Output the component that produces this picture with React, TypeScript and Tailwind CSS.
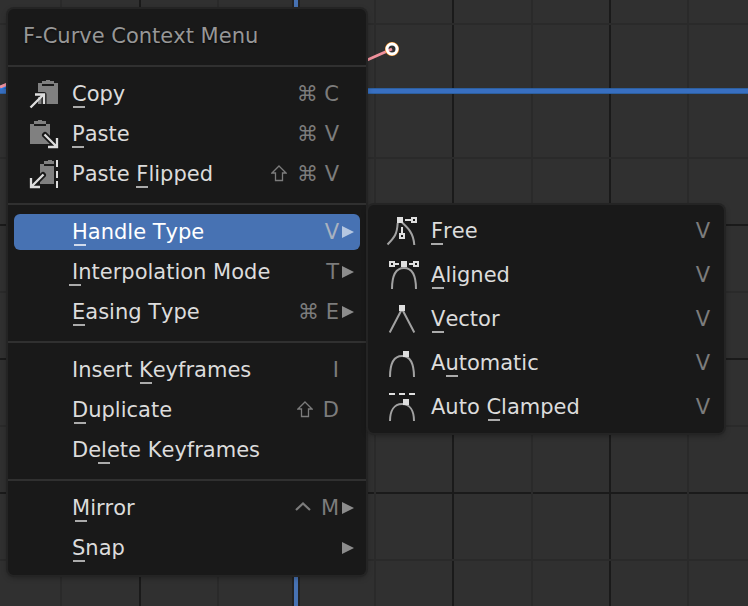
import type { ReactNode } from "react";

type Item = {
  before?: string;
  mnemonic: string;
  after: string;
  modifier?: ReactNode;
  shortcut?: string;
  icon?: ReactNode;
  submenu?: boolean;
  active?: boolean;
};

function Icon({ children }: { children: ReactNode }) {
  return (
    <svg className="size-8 overflow-visible" viewBox="0 0 32 32" fill="none" aria-hidden="true">
      {children}
    </svg>
  );
}

const copyIcon = (
  <Icon>
    <path d="M10 5h20v21H10z" fill="#808080" />
    <path d="M14 6h12v2H14z" fill="#191919" />
    <path d="M18 2h4v1h4v3H14V3h4z" fill="#808080" />
    <path d="M7 16.5H16V26" stroke="#191919" strokeWidth="5" strokeLinejoin="round" />
    <path d="M2.5 29.5L15.5 16.5M7 16.5H16V26" stroke="#dedede" strokeWidth="2.3" />
  </Icon>
);

const pasteIcon = (
  <Icon>
    <path d="M2 6h20v20H2z" fill="#808080" />
    <path d="M6 6h12v2H6z" fill="#191919" />
    <path d="M10 2h4v1h4v3H6V3h4z" fill="#808080" />
    <path d="M17 17L28 28" stroke="#191919" strokeWidth="6" strokeLinecap="round" />
    <path d="M16.5 16.5L28.5 28.5M29 20V29H20" stroke="#dedede" strokeWidth="2.3" />
  </Icon>
);

const flippedIcon = (
  <Icon>
    <path d="M12 6h14v20H12z" fill="#808080" />
    <path d="M16 6h10v2H16z" fill="#191919" />
    <path d="M20 2h4v1h2v3H16V3h4z" fill="#808080" />
    <path d="M15 17L4 28" stroke="#191919" strokeWidth="6" strokeLinecap="round" />
    <path d="M15.5 16.5L3.5 28.5M3 20V29H12" stroke="#dedede" strokeWidth="2.3" />
    <path d="M29 2V9M29 13V20M29 23V30" stroke="#dedede" strokeWidth="2" />
  </Icon>
);

const freeIcon = (
  <Icon>
    <path d="M1.5 29.5C9 22 11 19 11.7 8M16 7.5C22 13 27.5 18 28.3 30" stroke="#a2a2a2" strokeWidth="2" />
    <path d="M11 2h6v6h-6z" fill="#dedede" />
    <path d="M19 5H25M26 3h4v4h-4zM16 12V18M14 19h4v4h-4z" stroke="#dedede" strokeWidth="2" />
  </Icon>
);

const alignedIcon = (
  <Icon>
    <path d="M6 30C6 17 10 9 18 9S30 17 30 30" stroke="#a2a2a2" strokeWidth="2" />
    <path d="M15 2h6v6h-6z" fill="#dedede" />
    <path d="M4 3h4v4H4zM9 5H13M28 3h4v4h-4zM23 5H27" stroke="#dedede" strokeWidth="2" />
  </Icon>
);

const vectorIcon = (
  <Icon>
    <path d="M3.7 29.5L16 6L28.3 29.5" stroke="#a2a2a2" strokeWidth="2" />
    <path d="M13 2h6v6h-6z" fill="#dedede" />
  </Icon>
);

const automaticIcon = (
  <Icon>
    <path d="M4 30C4 17 8 9 16 9S28 17 28 30" stroke="#a2a2a2" strokeWidth="2" />
    <path d="M17 4h6v6h-6z" fill="#dedede" />
  </Icon>
);

const clampedIcon = (
  <Icon>
    <path d="M4 30C4 20 8 13 16 13S28 20 28 30" stroke="#a2a2a2" strokeWidth="2" />
    <path d="M17 8h6v6h-6z" fill="#dedede" />
    <path d="M3 3H9M13 3H19M23 3H29" stroke="#dedede" strokeWidth="2" />
  </Icon>
);

const shiftKey = (
  <svg className="h-[18px] w-4" viewBox="0 0 16 18" fill="none" role="img" aria-label="Shift">
    <path d="M8 1L15 8H11.5V15.5H4.5V8H1Z" stroke="#7c7c7c" strokeWidth="1.3" />
  </svg>
);

const controlKey = (
  <svg className="h-[18px] w-4" viewBox="0 0 16 18" fill="none" role="img" aria-label="Control">
    <path d="M1 11L8 4.5L15 11" stroke="#7c7c7c" strokeWidth="2.2" />
  </svg>
);

const sections: Item[][] = [
  [
    { mnemonic: "C", after: "opy", shortcut: "⌘ C", icon: copyIcon },
    { mnemonic: "P", after: "aste", shortcut: "⌘ V", icon: pasteIcon },
    { before: "Paste ", mnemonic: "F", after: "lipped", modifier: shiftKey, shortcut: "⌘ V", icon: flippedIcon },
  ],
  [
    { mnemonic: "H", after: "andle Type", shortcut: "V", submenu: true, active: true },
    { mnemonic: "I", after: "nterpolation Mode", shortcut: "T", submenu: true },
    { mnemonic: "E", after: "asing Type", shortcut: "⌘ E", submenu: true },
  ],
  [
    { before: "Insert ", mnemonic: "K", after: "eyframes", shortcut: "I" },
    { mnemonic: "D", after: "uplicate", modifier: shiftKey, shortcut: "D" },
    { before: "De", mnemonic: "l", after: "ete Keyframes" },
  ],
  [
    { mnemonic: "M", after: "irror", modifier: controlKey, shortcut: "M", submenu: true },
    { mnemonic: "S", after: "nap", submenu: true },
  ],
];

const handleTypes: Item[] = [
  { mnemonic: "F", after: "ree", shortcut: "V", icon: freeIcon },
  { mnemonic: "A", after: "ligned", shortcut: "V", icon: alignedIcon },
  { mnemonic: "V", after: "ector", shortcut: "V", icon: vectorIcon },
  { before: "A", mnemonic: "u", after: "tomatic", shortcut: "V", icon: automaticIcon },
  { before: "Auto ", mnemonic: "C", after: "lamped", shortcut: "V", icon: clampedIcon },
];

function Label({ item }: { item: Item }) {
  return (
    <span className="grow whitespace-pre text-left">
      {item.before}
      <span className="relative inline-block">
        {item.mnemonic}
        <span className="absolute bottom-0 left-1/2 h-0.5 w-3 -translate-x-1/2 bg-current opacity-75" />
      </span>
      {item.after}
    </span>
  );
}

function MenuItem({ item }: { item: Item }) {
  return (
    <button
      type="button"
      role="menuitem"
      aria-haspopup={item.submenu ? "menu" : undefined}
      className={
        item.active
          ? "flex h-9 items-center rounded-md bg-[#4772b3] pl-3.5 pr-1.5 text-white"
          : "flex h-9 items-center rounded-md pl-3.5 pr-1.5"
      }
    >
      <span className="mr-3 size-8 shrink-0">{item.icon}</span>
      <Label item={item} />
      <span
        className={
          item.active ? "flex items-center gap-2.5 text-[#a9b2c0]" : "flex items-center gap-2.5 text-[#7c7c7c]"
        }
      >
        {item.modifier}
        {item.shortcut}
      </span>
      <span className={item.active ? "ml-[3px] w-3 text-[#b5c7e1]" : "ml-[3px] w-3 text-[#8c8c8c]"}>
        {item.submenu && (
          <svg className="h-3 w-3" viewBox="0 0 12 12" aria-hidden="true">
            <path d="M0 0L12 6L0 12Z" fill="currentColor" />
          </svg>
        )}
      </span>
    </button>
  );
}

const majorX = [140, 453, 610];
const minorX = [61, 218, 375, 532, 688];
const majorY = [225, 359, 493];
const minorY = [24, 158, 292, 426, 560];

function Graph() {
  return (
    <svg className="absolute inset-0 h-full w-full" fill="none" aria-hidden="true">
      {majorX.map((x) => (
        <line key={x} x1={x} x2={x} y1="0" y2="100%" stroke="#1a1a1a" strokeWidth="2" />
      ))}
      {majorY.map((y) => (
        <line key={y} x1="0" x2="100%" y1={y} y2={y} stroke="#1a1a1a" strokeWidth="2" />
      ))}
      {minorX.map((x) => (
        <line key={x} x1={x} x2={x} y1="0" y2="100%" stroke="#2a2a2a" strokeWidth="2" />
      ))}
      {minorY.map((y) => (
        <line key={y} x1="0" x2="100%" y1={y} y2={y} stroke="#2a2a2a" strokeWidth="2" />
      ))}
      <line x1="296" x2="296" y1="0" y2="100%" stroke="#232323" strokeWidth="8" />
      <line x1="296" x2="296" y1="0" y2="100%" stroke="#4772b3" strokeWidth="4" />
      <line x1="0" x2="100%" y1="91" y2="91" stroke="#2c5f9f" strokeWidth="6" />
      <line x1="0" x2="100%" y1="91" y2="91" stroke="#386fc1" strokeWidth="4" />
      <path d="M0 88L10 84" stroke="#1c7df5" strokeWidth="4" />
      <path d="M0 87L10 83M340 72L392 49" stroke="#f0919c" strokeWidth="3" />
      <circle cx="392" cy="49" r="6" stroke="#ff9a2e" strokeWidth="2" />
      <circle cx="392" cy="49" r="5" stroke="#ffffff" strokeWidth="3" />
    </svg>
  );
}

export default function App() {
  return (
    <main className="relative min-h-screen overflow-hidden bg-[#303030] font-['DejaVu_Sans',sans-serif] text-[21px] leading-7 text-[#dcdcdc] [font-kerning:none]">
      <Graph />
      <div
        role="menu"
        aria-label="F-Curve Context Menu"
        className="absolute left-2 top-[9px] w-[358px] rounded-md bg-[#191919] shadow-[0_0_0_2px_#242424,0_2px_6px_#0006] [text-shadow:0_1px_2px_#000a]"
      >
        <h1 className="flex h-14 items-center px-[15px] pb-0.5 text-[#979797]">F-Curve Context Menu</h1>
        {sections.map((items, index) => (
          <div
            key={index}
            role="group"
            className="flex flex-col gap-1 border-t-2 border-[#303030] px-1.5 pb-[11px] pt-[9px] last:pb-[9px]"
          >
            {items.map((item) => (
              <MenuItem key={item.mnemonic + item.after} item={item} />
            ))}
          </div>
        ))}
      </div>
      <div
        role="menu"
        aria-label="Handle Type"
        className="absolute left-[368px] top-[205px] flex w-[356px] flex-col rounded-md bg-[#191919] py-1 shadow-[0_0_0_2px_#242424,0_2px_6px_#0006] [text-shadow:0_1px_2px_#000a]"
      >
        {handleTypes.map((item) => (
          <button
            key={item.mnemonic + item.after}
            type="button"
            role="menuitem"
            className="flex h-11 items-center pl-[18px] pr-3.5"
          >
            <span className="mr-[13px] size-8 shrink-0">{item.icon}</span>
            <Label item={item} />
            <span className="text-[#7c7c7c]">{item.shortcut}</span>
          </button>
        ))}
      </div>
    </main>
  );
}
